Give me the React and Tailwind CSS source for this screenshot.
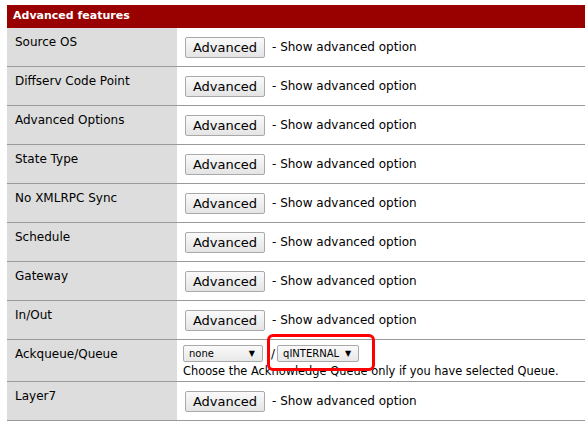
import React from "react";

const rows = [
  "Source OS",
  "Diffserv Code Point",
  "Advanced Options",
  "State Type",
  "No XMLRPC Sync",
  "Schedule",
  "Gateway",
  "In/Out",
];

function AdvButton() {
  return (
    <div className="flex items-center">
      <button className="w-[80px] h-[21px] border border-[#a9a9a9] rounded-[2px] bg-gradient-to-b from-[#fafafa] to-[#e4e4e4] text-[13px] text-black leading-none flex items-center justify-center">
        Advanced
      </button>
      <span className="ml-[7px] text-[12px] text-black">- Show advanced option</span>
    </div>
  );
}

function Row({ label, children, h = "h-[39px]" }) {
  return (
    <div className={`flex ${h} border-b border-[#9a9a9a]`}>
      <div className="w-[170px] shrink-0 bg-[#dddddd] pl-[8px] pt-[7px] text-[12px] leading-[14px] text-black">
        {label}
      </div>
      <div className="flex-1 flex items-center pl-[8px]">{children}</div>
    </div>
  );
}

function Select({ value, w }) {
  return (
    <div className={`${w} h-[17px] border border-[#a9a9a9] rounded-[2px] bg-gradient-to-b from-[#fafafa] to-[#e8e8e8] flex items-center justify-between pl-[5px] pr-[7px] text-[10px] leading-none text-black`}>
      <span>{value}</span>
      <span className="text-[8px]">▼</span>
    </div>
  );
}

export default function App() {
  return (
    <div className="w-[585px] h-[424px] bg-white pt-[5px] pl-[7px] overflow-hidden" style={{ fontFamily: '"DejaVu Sans", Verdana, sans-serif' }}>
      <div className="h-[23px] bg-[#990000] flex items-center pl-[6px] text-white font-bold text-[11px]">
        Advanced features
      </div>
      {rows.map((r) => (
        <Row key={r} label={r}>
          <AdvButton />
        </Row>
      ))}
      <Row label="Ackqueue/Queue" h="h-[42px]">
        <div className="relative flex flex-col -ml-[2px] pt-[1px]">
          <div className="flex items-center">
            <Select value="none" w="w-[80px]" />
            <span className="ml-[8px] mr-[2px] text-[12px]">/</span>
            <Select value="qINTERNAL" w="w-[82px]" />
          </div>
          <div className="text-[11.4px] leading-[14px] mt-[1px] text-black">
            Choose the Acknowledge Queue only if you have selected Queue.
          </div>
          <div className="absolute left-[84px] top-[-10px] w-[108px] h-[37px] border-[3px] border-[#ff0000] rounded-[6px]" />
        </div>
      </Row>
      <Row label="Layer7">
        <AdvButton />
      </Row>
    </div>
  );
}
